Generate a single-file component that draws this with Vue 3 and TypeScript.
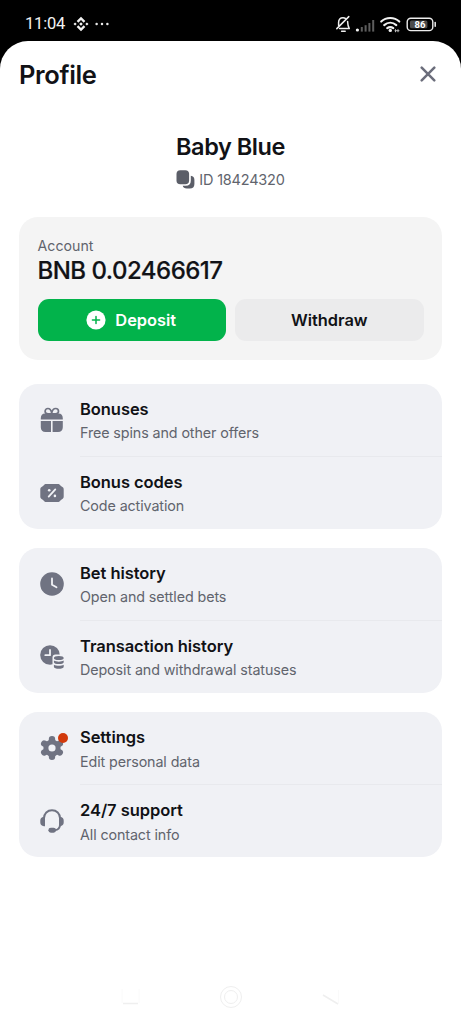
<script setup lang="ts">
type IconName = 'gift' | 'coupon' | 'clock' | 'transactions' | 'settings' | 'support'

interface MenuItem {
  icon: IconName
  title: string
  subtitle: string
  alert?: boolean
}

const groups: MenuItem[][] = [
  [
    { icon: 'gift', title: 'Bonuses', subtitle: 'Free spins and other offers' },
    { icon: 'coupon', title: 'Bonus codes', subtitle: 'Code activation' },
  ],
  [
    { icon: 'clock', title: 'Bet history', subtitle: 'Open and settled bets' },
    { icon: 'transactions', title: 'Transaction history', subtitle: 'Deposit and withdrawal statuses' },
  ],
  [
    { icon: 'settings', title: 'Settings', subtitle: 'Edit personal data', alert: true },
    { icon: 'support', title: '24/7 support', subtitle: 'All contact info' },
  ],
]
</script>

<template>
  <div class="phone">
    <div class="status">
      <span class="time">11:04</span>
      <svg class="diamond" viewBox="0 0 16 16" width="16" height="16" fill="#f2f2f2">
        <path d="M8 .8 12.3 5.1 10.7 6.7 8 4 5.3 6.7 3.7 5.1Z" />
        <path d="M8 15.2 12.3 10.9 10.7 9.3 8 12 5.3 9.3 3.7 10.9Z" />
        <path d="M8 6.2 9.8 8 8 9.8 6.2 8ZM2.1 6.4 3.7 8 2.1 9.6.5 8ZM13.9 6.4 15.5 8 13.9 9.6 12.3 8Z" />
      </svg>
      <svg class="dots" viewBox="0 0 14 4" width="14" height="4" fill="#e8e8e8">
        <circle cx="1.6" cy="2" r="1.25" /><circle cx="7" cy="2" r="1.25" /><circle cx="12.4" cy="2" r="1.25" />
      </svg>
      <svg class="tray" viewBox="0 0 104 20" width="104" height="20" fill="none">
        <g stroke="#f0f0f0" stroke-width="1.5" stroke-linecap="round" stroke-linejoin="round">
          <path d="M4.6 11.4V8.4C4.6 5.4 6.2 3.8 9 3.8 10 3.8 10.8 4 11.4 4.4M13.6 7.4C13.7 9.8 13.6 11.8 15.3 14.6H5.6M2.8 14.6 14.8 2.6M7.6 17.2H11.2" />
        </g>
        <circle cx="23.4" cy="16" r="1.6" fill="#f4f4f4" />
        <g fill="#5d5d5d">
          <rect x="26.8" y="13" width="2" height="4.600" /><rect x="30.6" y="11.2" width="2" height="6.400" />
          <rect x="34.4" y="9" width="2" height="8.6" /><rect x="38.200" y="6" width="2" height="11.6" />
        </g>
        <g stroke="#f2f2f2" stroke-width="2.100" stroke-linecap="round">
          <path d="M47.2 7.600C52.2 2.800 60.3 2.800 65.3 7.600M50.2 11.100C53.8 7.900 58.7 7.900 62.3 11.100M53.2 14.200C55.2 12.700 57.3 12.700 59.3 14.200" />
        </g>
        <circle cx="56.3" cy="16.4" r="1.7" fill="#f2f2f2" />
        <path d="M61.5 15.2v3M64 15.2v3M60.6 16.7h4.8" stroke="#bbb" stroke-width="1" />
        <rect x="73.2" y="4.2" width="25.6" height="12.4" rx="3.6" stroke="#ededed" stroke-width="1.4" />
        <rect x="76" y="6.5" width="17.4" height="7.8" rx="1.5" fill="#4b4b4b" />
        <path d="M101.2 8.6v3.6" stroke="#ededed" stroke-width="1.5" stroke-linecap="round" />
        <text x="86" y="13.8" class="charge" text-anchor="middle">86</text>
      </svg>
    </div>

    <main class="sheet">
      <header class="head">
        <h1>Profile</h1>
        <button class="close" aria-label="Close">
          <svg viewBox="0 0 16 16" width="16" height="16">
            <path d="M1.7 1.7 14.3 14.3M14.3 1.7 1.7 14.3" stroke="#6b6d7b" stroke-width="2.5" stroke-linecap="round" />
          </svg>
        </button>
      </header>

      <section class="user">
        <h2>Baby Blue</h2>
        <div class="uid">
          <svg viewBox="0 0 19 19" width="19" height="19" fill="#5b5e68">
            <rect x=".5" y=".2" width="12.6" height="14" rx="3.8" />
            <path d="M14.8 5.8c2.4.2 3.6 1.7 3.6 4V14c0 3-1.7 4.6-4.6 4.6h-3c-2.2 0-3.6-1-4.1-2.8h3.1c3.2 0 5-1.8 5-5Z" />
          </svg>
          <span>ID 18424320</span>
        </div>
      </section>

      <section class="account">
        <div class="label">Account</div>
        <div class="balance">BNB 0.02466617</div>
        <div class="actions">
          <button class="btn deposit">
            <svg viewBox="0 0 20 20" width="20" height="20">
              <circle cx="10" cy="10" r="9.6" fill="#fff" />
              <path d="M10 6.4v7.2M6.4 10h7.2" stroke="#02b34b" stroke-width="1.5" stroke-linecap="round" />
            </svg>
            <span>Deposit</span>
          </button>
          <button class="btn withdraw"><span>Withdraw</span></button>
        </div>
      </section>

      <nav class="groups">
        <div v-for="(group, g) in groups" :key="g" class="group">
          <div v-for="item in group" :key="item.icon" class="row">
            <div class="icon">
              <svg v-if="item.icon === 'gift'" viewBox="0 0 24 24" width="24" height="24" fill="#707382">
                <path d="M11.7 5.8H8C6.3 5.8 5.1 4.8 5.1 3.2S6.3.5 7.9.5c2.1 0 3.3 2 3.8 4.7.5-2.7 1.9-4.7 4-4.7 1.6 0 2.8 1.1 2.8 2.7S17.3 5.8 15.6 5.8Z" fill="none" stroke="#707382" stroke-width="1.7" />
                <path d="M.8 11.4V10.2C.8 7.4 2.4 5.6 5 5.6h13.6c2.6 0 4.2 1.8 4.2 4.6v1.2ZM.8 13H11v10.9H5.6C2.5 23.9.8 22.2.8 19.2ZM12.6 13h10.2v6.2c0 3-1.7 4.7-4.8 4.7h-5.4Z" />
              </svg>
              <svg v-else-if="item.icon === 'coupon'" viewBox="0 0 24 24" width="24" height="24">
                <path d="M6.200 3h11.600c1.100 0 1.800.5 2.400 1.300.5.700 1 1.100 1.800 1.500 1.200.6 1.700 1.400 1.700 2.700v7c0 1.300-.5 2.100-1.700 2.700-.8.400-1.300.8-1.800 1.500-.6.800-1.300 1.300-2.400 1.300H6.200c-1.100 0-1.800-.5-2.400-1.300-.5-.7-1-1.100-1.800-1.500C.8 17.600.3 16.800.3 15.500v-7C.3 7.200.8 6.400 2 5.800c.8-.4 1.300-.8 1.800-1.500C4.400 3.500 5.100 3 6.200 3Z" fill="#707382" />
                <path d="m8.700 15.6 6.6-7.2" stroke="#f1f2f6" stroke-width="1.8" stroke-linecap="round" />
                <circle cx="9.2" cy="9.2" r="1.3" fill="#f1f2f6" /><circle cx="14.9" cy="14.9" r="1.3" fill="#f1f2f6" />
              </svg>
              <svg v-else-if="item.icon === 'clock'" viewBox="0 0 24 24" width="24" height="24">
                <circle cx="12" cy="12" r="11.8" fill="#707382" />
                <path d="M12 6.5v6.3l4.5 2.5" fill="none" stroke="#f1f2f6" stroke-width="1.8" stroke-linecap="round" stroke-linejoin="round" />
              </svg>
              <svg v-else-if="item.icon === 'transactions'" viewBox="0 0 24 24" width="24" height="24">
                <circle cx="10" cy="10" r="9.8" fill="#707382" />
                <path d="M10 4.9V10.2H5.3" fill="none" stroke="#f1f2f6" stroke-width="1.8" stroke-linecap="round" stroke-linejoin="round" />
                <rect x="12.5" y="9.4" width="12" height="15" rx="3" fill="#f1f2f6" />
                <ellipse cx="18.8" cy="13" rx="4.9" ry="2" fill="#707382" />
                <path d="M13.9 15.5c2.500 1.500 7.300 1.500 9.800 0v1.700c0 2.500-9.800 2.500-9.800 0ZM13.900 19.700c2.500 1.500 7.300 1.500 9.800 0v2c0 2.700-9.800 2.700-9.800 0Z" fill="#707382" />
              </svg>
              <svg v-else-if="item.icon === 'settings'" viewBox="0 0 24 24" width="24" height="24">
                <path d="M12 3.300V20.700M4.200 7.500 19.800 16.500M19.800 7.500 4.200 16.500" stroke="#707382" stroke-width="6.400" stroke-linecap="round" />
                <circle cx="12" cy="12" r="8.600" fill="#707382" />
                <circle cx="12" cy="12" r="3.6" fill="#f1f2f6" />
              </svg>
              <svg v-else viewBox="0 0 24 24" width="24" height="24">
                <path d="M4 9.200C4 4.600 7.400 1.300 12 1.300s8 3.300 8 7.900v6.500c0 3.400-2 5.200-5.500 5.600" fill="none" stroke="#707382" stroke-width="1.900" />
                <path d="M5 7.800v9.500H3.900C1.600 17 .3 15.500.3 13.500v-2C.3 9.600 1.600 8 3.700 7.800ZM19 7.800v9.500h1.100c2.300-.3 3.600-1.800 3.600-3.800v-2c0-1.900-1.300-3.500-3.400-3.700Z" fill="#707382" />
                <rect x="8.400" y="18.800" width="7.600" height="4.900" rx="2.450" fill="#707382" />
              </svg>
              <span v-if="item.alert" class="alert"></span>
            </div>
            <div class="copy">
              <div class="title">{{ item.title }}</div>
              <div class="sub">{{ item.subtitle }}</div>
            </div>
          </div>
        </div>
      </nav>

      <svg class="softkeys" viewBox="0 0 220 24" width="220" height="24" fill="none" stroke="#efefef">
        <path d="M1 4v14M18 4v14" stroke="#fafafa" /><path d="M2 18.5h15" stroke-width="1.5" />
        <circle cx="110" cy="12" r="10.5" /><circle cx="110" cy="12" r="6.5" />
        <path d="m202 10 15 9" stroke-width="1.5" /><path d="M217.5 5v14" stroke="#fafafa" />
      </svg>
    </main>
  </div>
</template>

<style>
body {
  background: #000;
}
</style>

<style scoped>
.phone {
  display: flex;
  flex-direction: column;
  height: 1024px;
  background: #000;
  color: #111216;
  font-family: Inter, "Liberation Sans", sans-serif;
}
.status {
  display: flex;
  align-items: center;
  flex: 0 0 41px;
  box-sizing: border-box;
  padding: 6px 23px 0 25px;
}
.time {
  width: 47.5px;
  color: #f3f3f3;
  font: 16.5px/20px Roboto, sans-serif;
  letter-spacing: -0.2px;
}
.dots {
  margin-left: 6px;
}
.tray {
  margin-left: auto;
}
.charge {
  fill: #fff;
  font: 700 9.5px Roboto, sans-serif;
}
.sheet {
  display: flex;
  flex-direction: column;
  flex: 1;
  padding: 0 19px;
  border-radius: 28px 28px 0 0;
  background: #fff;
}
.head {
  display: flex;
  align-items: center;
  justify-content: space-between;
  height: 66px;
}
h1, h2 {
  margin: 0;
  font-weight: 600;
}
h1 {
  font-size: 25.5px;
  letter-spacing: -0.35px;
}
button {
  border: 0;
  padding: 0;
  background: none;
  color: inherit;
  font: inherit;
}
.close {
  display: flex;
  padding-right: 6px;
}
.user {
  display: flex;
  flex-direction: column;
  align-items: center;
  height: 110px;
  padding-top: 25px;
  box-sizing: border-box;
}
h2 {
  font-size: 23.5px;
  line-height: 30px;
  letter-spacing: -0.45px;
}
.uid {
  display: flex;
  align-items: center;
  gap: 4px;
  height: 20px;
  margin-top: 7px;
  color: #61646d;
  font-size: 14.5px;
  letter-spacing: -0.2px;
}
.account {
  height: 143px;
  box-sizing: border-box;
  padding: 20px 18.5px 19px;
  border-radius: 19px;
  background: #f4f4f4;
}
.label {
  color: #61646d;
  font-size: 14.2px;
  line-height: 18px;
}
.balance {
  font-size: 24px;
  font-weight: 500;
  line-height: 31px;
  letter-spacing: -0.52px;
  white-space: nowrap;
  -webkit-text-stroke: 0.2px #111216;
}
.actions {
  display: grid;
  grid-template-columns: 1fr 1fr;
  gap: 9px;
  margin-top: 13px;
}
.btn {
  display: flex;
  align-items: center;
  justify-content: center;
  gap: 9px;
  height: 42px;
  border-radius: 11px;
  font-size: 16.4px;
  font-weight: 600;
}
.deposit {
  padding-right: 1px;
  background: #02b34b;
  color: #fff;
}
.withdraw {
  background: #ebebec;
}
.groups {
  display: flex;
  flex-direction: column;
  gap: 19.3px;
  margin-top: 23.7px;
}
.group {
  height: 145px;
  border-radius: 19px;
  background: #f0f1f5;
}
.row {
  display: flex;
  height: 73px;
  padding-left: 20.5px;
}
.row + .row {
  height: 72px;
}
.icon {
  position: relative;
  width: 40.5px;
  padding-top: 24px;
}
.icon svg {
  display: block;
  overflow: visible;
}
.alert {
  position: absolute;
  top: 21px;
  left: 18px;
  width: 10px;
  height: 10px;
  border-radius: 50%;
  background: #d23a0c;
}
.copy {
  flex: 1;
  padding-top: 15px;
}
.row:first-child .copy {
  border-bottom: 1px solid #e8e9ed;
}
.title {
  font-size: 16.5px;
  font-weight: 600;
  line-height: 20px;
  letter-spacing: -0.06px;
}
.sub {
  margin-top: 5.3px;
  color: #61646d;
  font-size: 14.3px;
  line-height: 18px;
  letter-spacing: -0.1px;
}
.softkeys {
  margin: auto auto 15px;
}
</style>
